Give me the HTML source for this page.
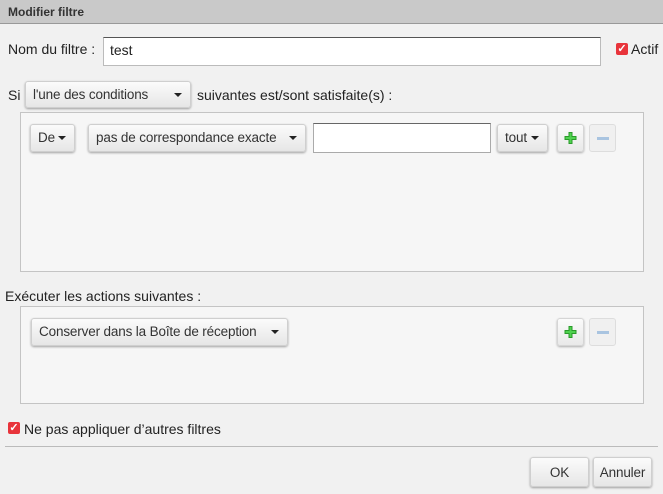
<!DOCTYPE html>
<html><head><meta charset="utf-8"><style>
*{box-sizing:border-box}
body{margin:0;width:663px;height:494px;background:#f1f1f1;font-family:"Liberation Sans",Arial,sans-serif;font-size:14px;color:#222;position:relative;overflow:hidden}
.a{position:absolute}
.hdr{left:0;top:0;width:663px;height:24px;background:#c9c9c9;border-bottom:1px solid #999;font-weight:bold;font-size:12px;color:#333;padding:5px 0 0 8px}
.btn{position:absolute;background:linear-gradient(#fbfbfb,#e6e6e6);border:1px solid #cfcfcf;border-radius:3px;box-shadow:0 1px 2px rgba(0,0,0,.35);font-size:13.5px;letter-spacing:-0.15px;color:#333;padding-left:7px;line-height:26px;white-space:nowrap}
.car{position:absolute;right:8px;top:11px;width:0;height:0;border-left:4px solid transparent;border-right:4px solid transparent;border-top:4px solid #222}
.box{position:absolute;left:20px;width:624px;border:1px solid #c4c4c4;background:#f6f6f6}
.inp{position:absolute;background:#fff;border:1px solid #bbb;border-top-color:#555}
.cb{position:absolute;width:12px;height:12px;background:#e8343b;border-radius:2px;color:#fff;font-size:11px;line-height:12px;text-align:center;font-weight:bold}
.pm{position:absolute;width:27px;height:28px;border:1px solid #d5d5d5;border-radius:3px;background:linear-gradient(#fbfbfb,#e9e9e9);box-shadow:0 1px 2px rgba(0,0,0,.3)}
.mn{box-shadow:none;background:#f0f0f0;border-color:#ddd}
</style></head><body>
<div class="a hdr">Modifier filtre</div>
<div class="a" style="left:8px;top:41px">Nom du filtre :</div>
<div class="inp" style="left:103px;top:37px;width:498px;height:29px;padding:4px 0 0 6px">test</div>
<div class="cb" style="left:616px;top:43px">✓</div>
<div class="a" style="left:631px;top:41px">Actif</div>
<div class="a" style="left:8px;top:87px">Si</div>
<div class="btn" style="left:25px;top:81px;width:166px;height:27px">l'une des conditions<span class="car"></span></div>
<div class="a" style="left:197px;top:87px">suivantes est/sont satisfaite(s) :</div>
<div class="box" style="top:112px;height:160px"></div>
<div class="btn" style="left:30px;top:124px;width:45px;height:28px">De<span class="car"></span></div>
<div class="btn" style="left:88px;top:124px;width:218px;height:28px">pas de correspondance exacte<span class="car"></span></div>
<div class="inp" style="left:313px;top:123px;width:178px;height:30px;border-color:#aaa;border-top-color:#666"></div>
<div class="btn" style="left:497px;top:124px;width:51px;height:28px">tout<span class="car"></span></div>
<div class="pm" style="left:557px;top:124px"><svg width="27" height="28" style="position:absolute;left:-1px;top:-1px"><path d="M13.5 8v12M7.5 14h12" stroke="#2a9a2a" stroke-width="4"/><path d="M13.5 9v10M8.5 14h10" stroke="#4fd24f" stroke-width="2"/></svg></div>
<div class="pm mn" style="left:589px;top:124px"><div class="a" style="left:7px;top:12px;width:12px;height:3px;background:#a9c4e0"></div></div>
<div class="a" style="left:5px;top:288px">Exécuter les actions suivantes :</div>
<div class="box" style="top:306px;height:98px"></div>
<div class="btn" style="left:31px;top:318px;width:257px;height:28px">Conserver dans la Boîte de réception<span class="car"></span></div>
<div class="pm" style="left:557px;top:318px"><svg width="27" height="28" style="position:absolute;left:-1px;top:-1px"><path d="M13.5 8v12M7.5 14h12" stroke="#2a9a2a" stroke-width="4"/><path d="M13.5 9v10M8.5 14h10" stroke="#4fd24f" stroke-width="2"/></svg></div>
<div class="pm mn" style="left:589px;top:318px"><div class="a" style="left:7px;top:12px;width:12px;height:3px;background:#a9c4e0"></div></div>
<div class="cb" style="left:8px;top:422px">✓</div>
<div class="a" style="left:24px;top:421px">Ne pas appliquer d’autres filtres</div>
<div class="a" style="left:5px;top:446px;width:653px;height:1px;background:#bbb"></div>
<div class="btn" style="left:530px;top:457px;width:59px;height:30px;text-align:center;padding:0;line-height:30px">OK</div>
<div class="btn" style="left:593px;top:457px;width:59px;height:30px;text-align:center;padding:0;line-height:30px">Annuler</div>
</body></html>
